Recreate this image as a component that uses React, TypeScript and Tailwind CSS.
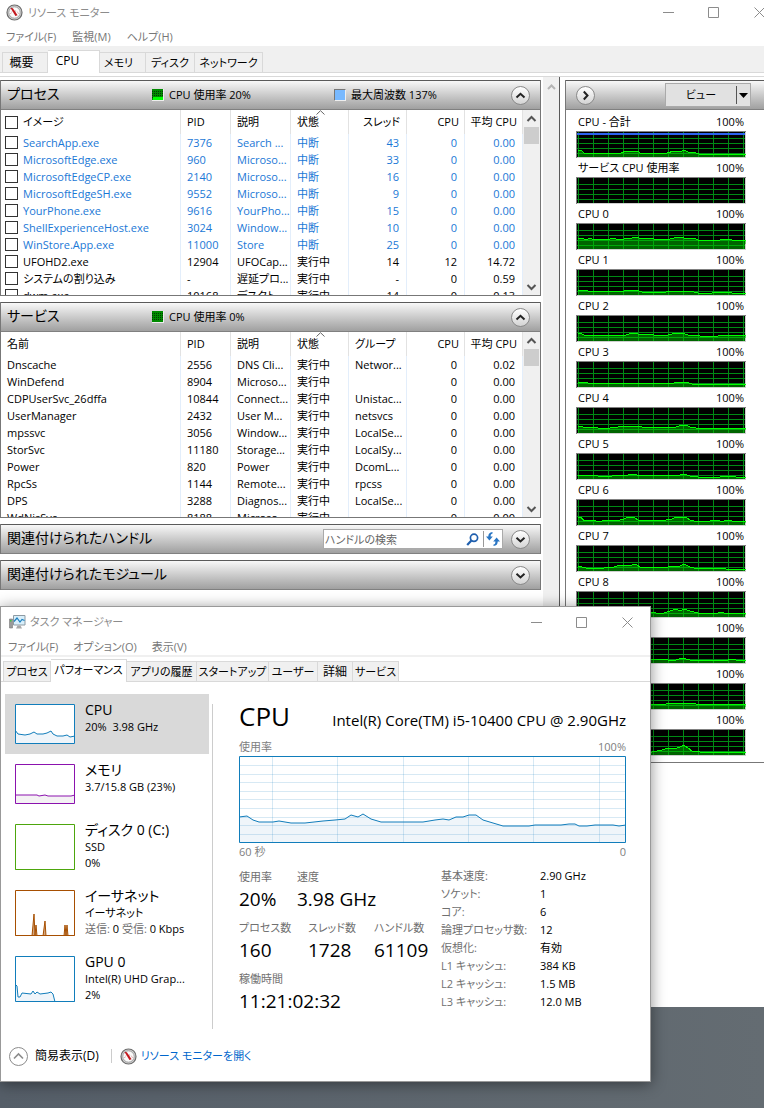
import type { ReactNode } from 'react'

type Row = string[]

const processes: Row[] = [
  ['SearchApp.exe', '7376', 'Search ...', '中断', '43', '0', '0.00'],
  ['MicrosoftEdge.exe', '960', 'Microso...', '中断', '33', '0', '0.00'],
  ['MicrosoftEdgeCP.exe', '2140', 'Microso...', '中断', '16', '0', '0.00'],
  ['MicrosoftEdgeSH.exe', '9552', 'Microso...', '中断', '9', '0', '0.00'],
  ['YourPhone.exe', '9616', 'YourPho...', '中断', '15', '0', '0.00'],
  ['ShellExperienceHost.exe', '3024', 'Window...', '中断', '10', '0', '0.00'],
  ['WinStore.App.exe', '11000', 'Store', '中断', '25', '0', '0.00'],
  ['UFOHD2.exe', '12904', 'UFOCap...', '実行中', '14', '12', '14.72'],
  ['システムの割り込み', '-', '遅延プロ...', '実行中', '-', '0', '0.59'],
  ['dwm.exe', '10168', 'デスクト...', '実行中', '14', '0', '0.13'],
]

const services: Row[] = [
  ['Dnscache', '2556', 'DNS Cli...', '実行中', 'Networ...', '0', '0.02'],
  ['WinDefend', '8904', 'Microso...', '実行中', '', '0', '0.00'],
  ['CDPUserSvc_26dffa', '10844', 'Connect...', '実行中', 'Unistac...', '0', '0.00'],
  ['UserManager', '2432', 'User M...', '実行中', 'netsvcs', '0', '0.00'],
  ['mpssvc', '3056', 'Window...', '実行中', 'LocalSe...', '0', '0.00'],
  ['StorSvc', '11180', 'Storage...', '実行中', 'LocalSy...', '0', '0.00'],
  ['Power', '820', 'Power', '実行中', 'DcomL...', '0', '0.00'],
  ['RpcSs', '1144', 'Remote...', '実行中', 'rpcss', '0', '0.00'],
  ['DPS', '3288', 'Diagnos...', '実行中', 'LocalSe...', '0', '0.00'],
  ['WdNisSvc', '8188', 'Microso...', '実行中', '', '0', '0.00'],
]

const graphs = [
  { label: 'CPU - 合計', line: '2,19 6,20 8,22 45,22 50,20 62,20 64,22 91,22 98,20 104,21 108,19 112,21 120,22 123,23 170,23' },
  { label: 'サービス CPU 使用率', line: '' },
  { label: 'CPU 0', line: '2,15 6,15 10,17 14,15 18,17 24,16 34,16 36,15 40,16 48,16 56,15 60,14 66,16 72,15 78,16 90,17 98,15 102,14 108,15 116,15 120,16 124,18 128,17 134,18 144,17 150,16 156,17 170,17' },
  { label: 'CPU 1', line: '2,22 6,21 12,22 26,22 30,23 38,22 46,23 50,21 56,22 60,21 66,23 90,23 94,22 114,22 122,24 136,24 140,23 144,24 150,23 156,24 170,24' },
  { label: 'CPU 2', line: '2,18 6,19 10,21 18,20 34,21 42,20 50,20 56,18 62,19 68,20 74,19 78,20 84,21 92,20 100,18 106,18 112,20 124,21 142,21 150,20 160,20 170,21' },
  { label: 'CPU 3', line: '2,22 5,21 12,22 26,22 30,23 40,22 60,22 90,22 98,22 102,21 106,22 110,21 116,23 122,24 134,23 138,24 142,23 150,24 158,23 164,24 170,23' },
  { label: 'CPU 4', line: '2,19 6,19 8,21 16,20 22,21 34,21 42,20 50,19 60,19 66,20 76,21 84,20 92,21 100,20 106,18 110,18 114,20 120,21 130,22 136,21 150,21 156,22 170,21' },
  { label: 'CPU 5', line: '2,22 18,22 22,23 36,23 40,22 52,22 58,21 64,23 76,22 90,23 94,22 104,22 108,21 114,23 122,24 144,24 150,23 160,24 170,24' },
  { label: 'CPU 6', line: '2,18 5,18 8,22 14,21 20,22 26,22 32,21 40,22 48,20 52,18 58,18 62,21 78,22 90,21 96,20 100,18 110,18 114,21 122,23 134,22 142,21 146,23 150,21 156,22 170,22' },
  { label: 'CPU 7', line: '2,21 6,22 10,23 28,23 38,22 44,20 50,21 56,20 60,19 64,22 78,23 84,22 92,22 98,21 104,21 108,19 114,22 122,24 142,23 150,24 170,24' },
  { label: 'CPU 8', line: '2,22 40,22 74,21 80,22 88,22 94,20 100,18 104,20 108,18 114,20 122,22 142,22 144,21 148,22 170,22' },
  { label: 'CPU 9', line: '2,23 40,22 76,23 84,22 92,23 100,23 106,21 110,22 114,23 128,23 130,24 134,23 152,23 156,22 160,23 170,23' },
  { label: 'CPU 10', line: '2,21 40,21 90,21 96,20 110,20 120,21 124,22 136,21 140,22 146,21 150,22 152,21 170,22' },
  { label: 'CPU 11', line: '2,23 40,23 76,23 86,21 92,19 98,20 104,18 108,16 112,19 116,22 124,23 144,23 146,24 150,23 170,23' },
]

const devices = [
  { name: 'CPU', lines: ['20%  3.98 GHz'], color: '#117dbb', fill: '#eff5fa', h: 40, line: '0,26 3,30 10,31 15,30 19,28 22,30 28,30 32,29 36,27 38,30 42,32 48,32 52,31 55,33 60,32' },
  { name: 'メモリ', lines: ['3.7/15.8 GB (23%)'], color: '#8b12ae', fill: '#f4f2f4', h: 40, line: '0,31 22,31 24,32 30,31 33,32 56,32 60,31' },
  { name: 'ディスク 0 (C:)', lines: ['SSD', '0%'], color: '#4da60c', fill: '#eff7e9', h: 46, line: '0,46 41,46 42,45 43,46 60,46' },
  { name: 'イーサネット', lines: ['イーサネット'], color: '#a74f01', fill: '#d3a780', h: 46, line: '0,46 17,46 19,24 20,45 21,35 22,46 28,46 30,31 31,46 49,46 50,35 51,45 52,35 53,46 60,46' },
  { name: 'GPU 0', lines: ['Intel(R) UHD Grap...', '2%'], color: '#117dbb', fill: '#eff5fa', h: 46, line: '0,28 2,30 3,41 5,41 7,37 16,38 18,35 20,38 22,36 25,38 33,37 36,36 38,38 40,46 60,46' },
]

const specs = [
  ['基本速度:', '2.90 GHz'],
  ['ソケット:', '1'],
  ['コア:', '6'],
  ['論理プロセッサ数:', '12'],
  ['仮想化:', '有効'],
  ['L1 キャッシュ:', '384 KB'],
  ['L2 キャッシュ:', '1.5 MB'],
  ['L3 キャッシュ:', '12.0 MB'],
]

const cpuLine =
  '0,61 8,60 14,64 20,66 34,66 40,65 52,67 66,67 84,65 96,64 106,63 112,59 119,61 124,58 132,63 142,66 184,66 196,64 204,63 210,64 217,61 224,61 230,59 237,59 244,64 254,67 264,70 290,70 296,69 322,69 330,68 336,68 340,70 348,70 356,69 374,69 380,70 387,69'

function GaugeIcon() {
  return (
    <svg className="size-[17px] shrink-0" viewBox="0 0 17 17" aria-hidden="true">
      <circle cx="8.5" cy="8.5" r="7.5" fill="#d4d4d4" stroke="#6c6c6c" strokeWidth="1.2" />
      <circle cx="8.5" cy="8.5" r="5.7" fill="#fafafa" stroke="#8f8f8f" strokeWidth=".8" />
      <path d="M4.5 10A4.2 4.2 0 0 1 12.6 10" fill="none" stroke="#d08a8a" strokeDasharray="1 1" />
      <path d="M4.4 3.8L6.9 4.2L11.6 11.2L9.4 12Z" fill="#c4161c" />
    </svg>
  )
}

function MonitorIcon() {
  return (
    <svg className="size-[17px] shrink-0" viewBox="0 0 17 17" aria-hidden="true">
      <path d="M.5 5h3v9h-3z" fill="#9a9a9a" stroke="#777" strokeWidth=".6" />
      <path d="M1 6h1.5v1.5H1z" fill="#3fc53f" />
      <path d="M4.5 1.5h11.5v9.5h-11.5z" fill="#d8effb" stroke="#8d9aa3" />
      <path d="M5 7.5L8 4L11 8L13 5.5L15.5 6.5" fill="none" stroke="#1a7fc0" strokeWidth="1.2" />
      <path d="M8.5 11.5h3l1.5 3h-6z" fill="#a8a8a8" />
    </svg>
  )
}

function WindowButtons() {
  return (
    <div className="flex text-[#8c8c8c]">
      <button aria-label="最小化" className="flex h-6 w-[46px] items-center justify-center">
        <svg className="size-[11px]" viewBox="0 0 11 11" fill="none" stroke="currentColor"><path d="M0 5.5H11" /></svg>
      </button>
      <button aria-label="最大化" className="flex h-6 w-[45px] items-center justify-center">
        <svg className="size-[11px]" viewBox="0 0 11 11" fill="none" stroke="currentColor"><path d="M.5 .5H10.5V10.5H.5Z" /></svg>
      </button>
      <button aria-label="閉じる" className="flex h-6 w-[46px] items-center justify-center">
        <svg className="size-[11px]" viewBox="0 0 11 11" fill="none" stroke="currentColor"><path d="M.5 .5L10.5 10.5M10.5 .5L.5 10.5" /></svg>
      </button>
    </div>
  )
}

function RoundButton({ label, d }: { label: string; d: string }) {
  return (
    <button aria-label={label} className="flex size-[19px] shrink-0 items-center justify-center rounded-full border border-[#8a8a8a] bg-linear-to-b from-white to-[#d4d4d4]">
      <svg className="size-[11px]" viewBox="0 0 11 11" fill="none" stroke="#222" strokeWidth="2"><path d={d} /></svg>
    </button>
  )
}

const UP = 'M1.5 7.5L5.5 3.8L9.5 7.5'
const DOWN = 'M1.5 3.8L5.5 7.5L9.5 3.8'
const RIGHT = 'M3.8 1.5L7.5 5.5L3.8 9.5'

function UsageIcon({ active }: { active?: boolean }) {
  return (
    <svg className="size-3 shrink-0" viewBox="0 0 12 12" shapeRendering="crispEdges" aria-hidden="true">
      <path d="M0 0h12v12H0z" fill="#eee" />
      <path d="M0 0h11v11H0z" fill="#008a00" />
      <path d="M0 2.5H11M0 4.5H11M0 6.5H11M0 8.5H11" stroke="#003c00" strokeDasharray="1 1" />
      {active && <path d="M1 8h10v3H1z" fill="#0f0" />}
    </svg>
  )
}

function PanelHeader({ title, children, open }: { title: string; children?: ReactNode; open?: boolean }) {
  return (
    <div className="flex h-[30px] shrink-0 items-center border-t border-b border-t-[#5a5a5a] border-b-[#808080] bg-linear-to-b from-[#f8f8f8] to-[#a0a0a0] pr-[10px] pl-[6px]">
      <h2 className="w-[145px] shrink-0 pb-[2px] text-[14px] whitespace-nowrap">{title}</h2>
      <div className="flex flex-1 items-center">{children}</div>
      <RoundButton label={title} d={open ? UP : DOWN} />
    </div>
  )
}

function ScrollBar() {
  return (
    <div className="flex w-[17px] shrink-0 flex-col items-center bg-[#f0f0f0]" aria-hidden="true">
      <svg className="h-[17px] w-[11px] shrink-0" viewBox="0 0 11 17" fill="none" stroke="#555" strokeWidth="2"><path d="M1.5 11L5.5 7L9.5 11" /></svg>
      <div className="h-[17px] w-[15px] bg-[#cdcdcd]" />
      <svg className="mt-auto h-[17px] w-[11px] shrink-0" viewBox="0 0 11 17" fill="none" stroke="#555" strokeWidth="2"><path d="M1.5 7L5.5 11L9.5 7" /></svg>
    </div>
  )
}

function MonitorTable({ heads, rows, checks }: { heads: string[]; rows: Row[]; checks?: boolean }) {
  const right = (i: number) => (i > 4 || (checks && i === 4) ? 'text-right' : 'text-left')
  const box = 'size-[13px] shrink-0 appearance-none border border-[#333] bg-white'
  return (
    <div className="flex min-h-0 flex-1">
      <div className="min-w-0 flex-1 overflow-hidden">
        <table className="w-full table-fixed border-separate border-spacing-0 whitespace-nowrap">
          <colgroup>
            <col />
            <col className="w-[50px]" />
            <col className="w-[60px]" />
            <col className="w-[58px]" />
            <col className="w-[58px]" />
            <col className="w-[58px]" />
            <col className="w-[58px]" />
          </colgroup>
          <thead>
            <tr className="h-[24px]">
              {heads.map((h, i) => (
                <th key={h} className={`relative border-r border-[#e2e2e2] p-0 font-normal ${i === 0 ? 'pl-1' : i > 4 ? 'pr-[5px]' : 'px-[6px]'} ${right(i)}`}>
                  {i === 0 ? (
                    <label className="flex items-center gap-[5px]">
                      {checks ? <input type="checkbox" className={box} /> : null}
                      <span className={checks ? '' : 'pl-[2px]'}>{h}</span>
                    </label>
                  ) : h}
                  {i === 3 && (
                    <svg className="absolute top-0 left-[25px] h-[5px] w-[9px]" viewBox="0 0 9 5" fill="none" stroke="#666"><path d="M.5 4.5L4.5 .7L8.5 4.5" /></svg>
                  )}
                </th>
              ))}
            </tr>
          </thead>
          <tbody>
            {rows.map((row) => (
              <tr key={row[0]} className={`h-[17px] ${row[3] === '中断' ? 'text-[#1a78d6]' : ''}`}>
                {row.map((cell, i) => (
                  <td key={i} className={`overflow-hidden border-r border-[#e3eefb] p-0 ${i === 0 ? 'pl-1' : i > 3 && right(i) === 'text-right' ? 'pr-[7px]' : 'pl-[6px]'} ${right(i)}`}>
                    {i === 0 ? (
                      <label className="flex h-[17px] items-center gap-[5px]">
                        {checks ? <input type="checkbox" className={box} /> : null}
                        <span className={checks ? '' : 'pl-[2px]'}>{cell}</span>
                      </label>
                    ) : cell}
                  </td>
                ))}
              </tr>
            ))}
          </tbody>
        </table>
      </div>
      <ScrollBar />
    </div>
  )
}

function UsageGraph({ label, line }: { label: string; line: string }) {
  return (
    <div>
      <div className="flex h-[18px] items-center justify-between px-[2px] whitespace-nowrap">
        <span>{label}</span>
        <span>100%</span>
      </div>
      <svg className="mb-[1px] block h-[27px] w-full" viewBox="0 0 170 27" preserveAspectRatio="none" shapeRendering="crispEdges" aria-hidden="true">
        <path d="M0 0H170V27H0Z" fill="#d0d0d0" />
        <path d="M0 0H170V1H1V27H0Z" fill="#808080" />
        <path d="M1 1H169V26H1Z" fill="#000" />
        <path d="M1 7.5H169M1 12.5H169M1 17.5H169M1 22.5H169M2.5 1V26M17.5 1V26M32.5 1V26M47.5 1V26M62.5 1V26M77.5 1V26M92.5 1V26M107.5 1V26M122.5 1V26M137.5 1V26M152.5 1V26M167.5 1V26" stroke="#008a14" />
        {line && <polygon points={`2,26 ${line} 169,26`} fill="#00c800" fillOpacity=".5" />}
        {line && <polyline points={line} fill="none" stroke="#0f0" />}
        {label === 'CPU - 合計' && <path d="M1 2H169V4H1Z" fill="#2b62ee" />}
      </svg>
    </div>
  )
}

function Tabs({ items, active, className }: { items: string[][]; active: number; className: string }) {
  return (
    <div role="tablist" className={`flex items-end border-b border-[#d9d9d9] ${className}`}>
      {items.map(([label, width], i) => (
        <button
          key={label}
          role="tab"
          aria-selected={i === active}
          className={`border-t border-r border-[#d9d9d9] whitespace-nowrap ${width} ${i === active ? '-mb-px h-[23px] bg-white pb-[2px]' : 'h-[20px] bg-[#f0f0f0]'} ${i === 0 ? 'border-l' : ''}`}
        >
          {label}
        </button>
      ))}
    </div>
  )
}

function ResourceMonitor() {
  return (
    <main className="flex flex-1 flex-col overflow-hidden bg-white text-[11px] leading-[16px]">
      <header className="-mr-[18px] flex h-[25px] items-center gap-[5px] pl-[6px] text-[#8c8c8c]">
        <GaugeIcon />
        <h1 className="flex-1">リソース モニター</h1>
        <WindowButtons />
      </header>
      <nav className="flex h-[21px] items-center gap-[16px] pt-[3px] pl-[6px] text-[#777]">
        <button>ファイル(F)</button>
        <button>監視(M)</button>
        <button>ヘルプ(H)</button>
      </nav>
      <Tabs
        active={1}
        className="h-[27px] shrink-0 bg-[#f0f0f0] pl-[2px]"
        items={[['概要', 'w-[46px] pr-[7px] text-[12px]'], ['CPU', 'w-[52px] pr-[12px] text-[12px]'], ['メモリ', 'w-[46px] pr-[8px]'], ['ディスク', 'w-[49px]'], ['ネットワーク', 'w-[68px]']]}
      />
      <div className="mt-[3px] flex flex-1 border-t border-[#d9d9d9]">
        <div className="flex min-w-0 flex-1 flex-col gap-[6px] pt-[3px] pr-[2px]">
          <section className="flex h-[216px] flex-col border-r border-b border-l border-[#777]">
            <PanelHeader title="プロセス" open>
              <span className="flex w-[182px] items-center gap-[5px]"><UsageIcon active />CPU 使用率 20%</span>
              <span className="flex items-center gap-[5px]"><i className="size-3 border border-[#eee] border-t-[#777] border-l-[#777] bg-[#78b9ff]" />最大周波数 137%</span>
            </PanelHeader>
            <MonitorTable checks heads={['イメージ', 'PID', '説明', '状態', 'スレッド', 'CPU', '平均 CPU']} rows={processes} />
          </section>
          <section className="flex h-[216px] flex-col border-r border-b border-l border-[#777]">
            <PanelHeader title="サービス" open>
              <span className="flex items-center gap-[5px]"><UsageIcon />CPU 使用率 0%</span>
            </PanelHeader>
            <MonitorTable heads={['名前', 'PID', '説明', '状態', 'グループ', 'CPU', '平均 CPU']} rows={services} />
          </section>
          <section className="border-x border-[#777]">
            <PanelHeader title="関連付けられたハンドル">
              <label className="mr-[8px] ml-auto flex h-5 w-[180px] items-center border border-[#aaa] bg-white">
                <input type="text" aria-label="ハンドルの検索" placeholder="ハンドルの検索" className="h-full min-w-0 flex-1 pl-[1px] outline-none placeholder:text-[#666]" />
                <svg className="mr-1 size-[13px]" viewBox="0 0 13 13" fill="none" stroke="#1f5fae"><circle cx="8" cy="4.8" r="3.6" strokeWidth="1.7" /><path d="M5.4 7.6L1.2 12" strokeWidth="2.2" /></svg>
                <button aria-label="更新" className="flex h-4 items-center border-l border-[#999] px-[2px]">
                  <svg className="size-[14px]" viewBox="0 0 14 14" fill="#2a76c4"><path d="M6.5 0C3.5 .3 2.3 2 2.3 4.6H0L3.4 8.6L6.8 4.6H4.6C4.6 2.8 5 1.8 6.5 1.4ZM7.5 14C10.5 13.7 11.7 12 11.7 9.4H14L10.6 5.4L7.2 9.4H9.4C9.4 11.2 9 12.2 7.5 12.6Z" /></svg>
                </button>
              </label>
            </PanelHeader>
          </section>
          <section className="border-x border-[#777]">
            <PanelHeader title="関連付けられたモジュール" />
          </section>
        </div>
        <div className="flex w-4 shrink-0 justify-center bg-[#f0f0f0] pt-[6px]" aria-hidden="true">
          <svg className="h-[8px] w-[9px]" viewBox="0 0 9 8" fill="none" stroke="#b5b5b5" strokeWidth="2"><path d="M1 6L4.5 2.5L8 6" /></svg>
        </div>
        <aside className="w-[205px] shrink-0 border-l border-[#5a5a5a] pt-[3px] pl-[5px]">
          <div className="border-b border-l border-[#777]">
            <div className="flex h-[30px] items-center justify-between border-t border-b border-t-[#5a5a5a] border-b-[#808080] bg-linear-to-b from-[#f8f8f8] to-[#a0a0a0] pr-[13px] pl-[10px]">
              <RoundButton label="折りたたむ" d={RIGHT} />
              <button className="flex h-6 w-[86px] items-center border border-[#aaa] bg-[#e1e1e1]">
                <span className="flex-1">ビュー</span>
                <span className="flex h-[18px] w-[14px] items-center justify-center border-l border-[#555]">
                  <svg className="h-[5px] w-[9px]" viewBox="0 0 9 5"><path d="M0 0H9L4.5 5Z" /></svg>
                </span>
              </button>
            </div>
            <div className="pt-[3px] pr-[18px] pb-[5px] pl-[10px]">
              {graphs.map((g) => <UsageGraph key={g.label} {...g} />)}
            </div>
          </div>
        </aside>
      </div>
    </main>
  )
}

function Stat({ label, value, width }: { label: string; value: string; width?: string }) {
  return (
    <div className={width}>
      <dt className="h-5 leading-[20px] text-[#707070]">{label}</dt>
      <dd className="h-[31px] text-[19px] leading-[25px]">{value}</dd>
    </div>
  )
}

function TaskManager() {
  return (
    <section className="absolute top-[606px] right-[113px] left-0 border border-[#999] bg-white text-[11px] leading-[16px] whitespace-nowrap shadow-[0_2px_14px_rgba(0,0,0,0.45)]">
      <header className="flex h-[30px] items-center gap-1 pl-2 text-[#8c8c8c]">
        <MonitorIcon />
        <h1 className="flex-1">タスク マネージャー</h1>
        <WindowButtons />
      </header>
      <nav className="flex h-[20px] items-center gap-[15px] border-b-2 border-[#f0f0f0] pt-[2px] pl-[7px] text-[#777]">
        <button>ファイル(F)</button>
        <button>オプション(O)</button>
        <button>表示(V)</button>
      </nav>
      <Tabs
        active={1}
        className="h-[25px] pl-[2px]"
        items={[['プロセス', 'w-[48px]'], ['パフォーマンス', 'w-[76px]'], ['アプリの履歴', 'w-[70px]'], ['スタートアップ', 'w-[72px]'], ['ユーザー', 'w-[49px]'], ['詳細', 'w-[35px] text-[12px]'], ['サービス', 'w-[46px]']]}
      />
      <div className="flex pt-[12px] pl-1">
        <ul className="w-[204px] shrink-0">
          {devices.map((d, i) => (
            <li key={d.name}>
              <button className={`flex w-full gap-[10px] px-[10px] text-left ${d.h === 40 ? 'h-[60px]' : 'h-[66px]'} ${i === 0 ? 'bg-[#d9d9d9]' : ''}`}>
                <svg className="mt-[10px] w-[60px] shrink-0" height={d.h} viewBox={`0 0 60 ${d.h}`} fill="none" aria-hidden="true">
                  <path d={`M0 0H60V${d.h}H0Z`} fill="#fff" />
                  <polygon points={`0,${d.h} ${d.line} 60,${d.h}`} fill={d.fill} />
                  <polyline points={d.line} stroke={d.color} />
                  <path d={`M.5 .5H59.5V${d.h - 0.5}H.5Z`} stroke={d.color} />
                </svg>
                <span className="pt-[7px]">
                  <span className="block text-[14px] leading-[18px]">{d.name}</span>
                  {d.lines.map((l) => <span key={l} className="block whitespace-pre">{l}</span>)}
                  {d.name === 'イーサネット' && (
                    <span className="block"><span className="text-[#707070]">送信:</span> 0 <span className="text-[#707070]">受信:</span> 0 Kbps</span>
                  )}
                </span>
              </button>
            </li>
          ))}
        </ul>
        <div className="mt-[10px] ml-[3px] h-[325px] border-l border-[#ccc]" />
        <div className="min-w-0 flex-1 pr-6 pl-[26px]">
          <div className="flex items-baseline justify-between pt-[6px] leading-[32px]">
            <h2 className="text-[26px]">CPU</h2>
            <p className="text-[15px]">Intel(R) Core(TM) i5-10400 CPU @ 2.90GHz</p>
          </div>
          <div className="flex h-5 items-center justify-between pt-[2px] text-[#808080]"><span>使用率</span><span>100%</span></div>
          <svg className="block h-[87px] w-full" viewBox="0 0 387 87" preserveAspectRatio="none" fill="none" aria-hidden="true">
            <polygon points={`0,87 ${cpuLine} 387,87`} fill="#eff5fa" />
            <path d="M0 9.5H387M0 18.5H387M0 26.5H387M0 35.5H387M0 43.5H387M0 52.5H387M0 61.5H387M0 69.5H387M0 78.5H387M33.5 0V87M98.5 0V87M164.5 0V87M229.5 0V87M294.5 0V87M360.5 0V87" stroke="#117dbb" strokeOpacity=".17" />
            <polyline points={cpuLine} stroke="#117dbb" />
            <path d="M.5 .5H386.5V86.5H.5Z" stroke="#117dbb" />
          </svg>
          <div className="flex justify-between pt-[1px] text-[#808080]"><span>60 秒</span><span>0</span></div>
          <div className="flex pt-[7px]">
            <dl className="w-[202px] shrink-0">
              <div className="flex"><Stat label="使用率" value="20%" width="w-[58px]" /><Stat label="速度" value="3.98 GHz" /></div>
              <div className="flex"><Stat label="プロセス数" value="160" width="w-[69px]" /><Stat label="スレッド数" value="1728" width="w-[66px]" /><Stat label="ハンドル数" value="61109" /></div>
              <Stat label="稼働時間" value="11:21:02:32" />
            </dl>
            <dl className="grid grid-cols-[99px_auto] content-start leading-[18px]">
              {specs.map(([k, v]) => (
                <div key={k} className="contents"><dt className="text-[#707070]">{k}</dt><dd>{v}</dd></div>
              ))}
            </dl>
          </div>
        </div>
      </div>
      <footer className="flex h-[52px] items-center pt-[2px] pl-2">
        <button className="flex items-center gap-[7px] text-[12px]">
          <svg className="size-[19px]" viewBox="0 0 19 19" fill="none" stroke="#8c8c8c"><circle cx="9.5" cy="9.5" r="9" /><path d="M5 11.5L9.5 7L14 11.5" strokeWidth="1.6" /></svg>
          簡易表示(D)
        </button>
        <span className="mr-2 ml-3 h-[14px] border-l border-[#ccc]" />
        <a href="#" className="flex items-center gap-1 text-[#0066cc]"><GaugeIcon />リソース モニターを開く</a>
      </footer>
    </section>
  )
}

export default function App() {
  return (
    <div lang="ja" className="relative flex min-h-screen flex-col overflow-hidden bg-linear-to-r from-[#555e68] to-[#646c72] pb-[101px] font-['Open_Sans','Noto_Sans_CJK_JP',sans-serif] text-black [font-feature-settings:'palt']">
      <ResourceMonitor />
      <TaskManager />
    </div>
  )
}
